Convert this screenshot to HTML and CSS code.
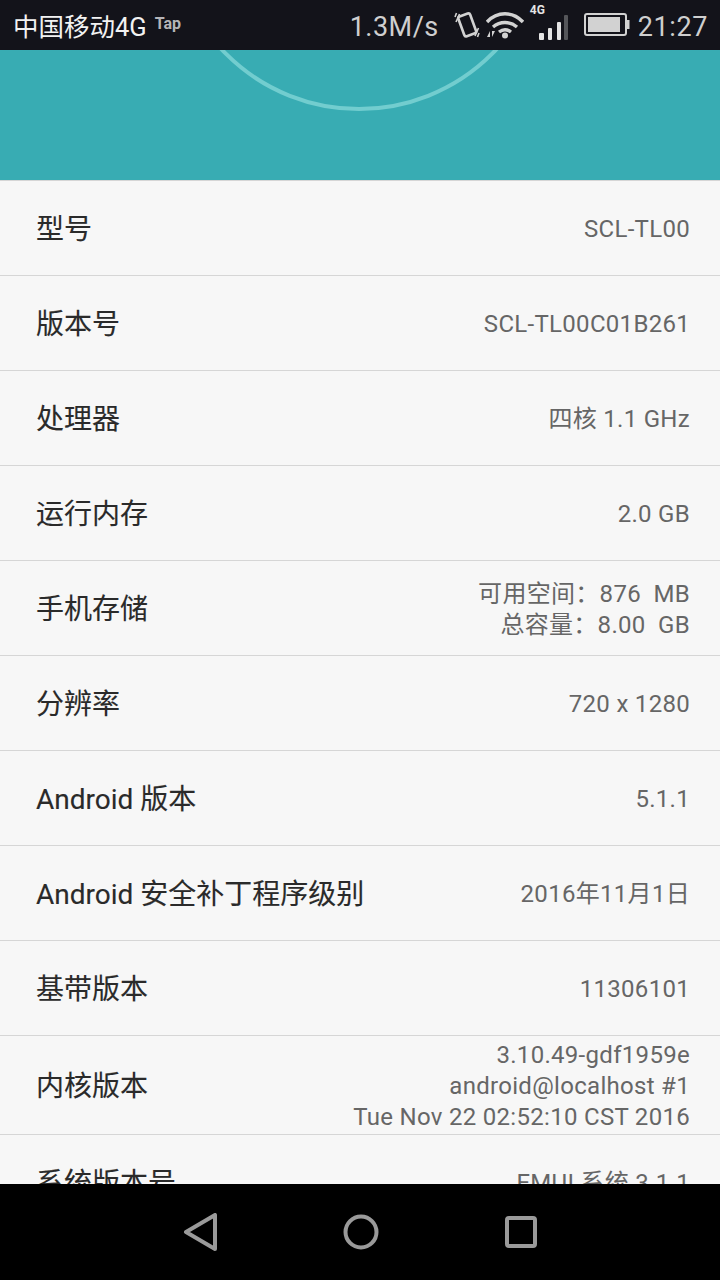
FILE: index.html
```html
<!DOCTYPE html>
<html lang="zh-CN">
<head>
    <meta charset="UTF-8">
    <title>关于手机</title>
    <link rel="stylesheet" href="styles.css">
</head>
<body>
    <div class="screen">
        <div class="status-bar">
            <div class="status-left">
                <span class="carrier">中国移动4G</span>
                <span class="tap">Tap</span>
            </div>
            <div class="status-right">
                <span class="speed">1.3M/s</span>
                <svg class="icon-vibrate" width="26" height="28" viewBox="0 0 26 28">
                    <rect x="7" y="3.5" width="12.5" height="21" rx="2" transform="rotate(-20 13 14)" fill="none" stroke="#d2d2d2" stroke-width="2.6"/>
                    <path d="M2 11l3.5-8M1 6l1.5-4M21 25l3.5-8M23.5 26l1.5-4" stroke="#d2d2d2" stroke-width="1.6" fill="none"/>
                </svg>
                <svg class="icon-wifi" width="38" height="28" viewBox="0 0 38 28">
                    <path d="M1 11C11 0 27 0 37 11M7 16c7-6 17-6 24 0M13 21c4-3 8-3 12 0" stroke="#d2d2d2" stroke-width="3.4" fill="none"/>
                    <circle cx="19" cy="24.5" r="3" fill="#d2d2d2"/>
                    <path d="M4 26v-6l-3 6zM6 20v6l3-6z" fill="#d2d2d2"/>
                </svg>
                <div class="signal">
                    <span class="signal-4g">4G</span>
                    <svg width="30" height="26" viewBox="0 0 30 26">
                        <rect x="0" y="18" width="5" height="7" rx="1" fill="#e4e4e4"/>
                        <rect x="9" y="13" width="4" height="12" rx="1" fill="#e4e4e4"/>
                        <rect x="18" y="7" width="4" height="18" rx="1" fill="#e4e4e4"/>
                        <rect x="25" y="0" width="4" height="25" rx="1" fill="#55565a"/>
                    </svg>
                </div>
                <svg class="icon-battery" width="46" height="24" viewBox="0 0 46 24">
                    <rect x="1" y="1" width="41" height="21" rx="2" fill="none" stroke="#d2d2d2" stroke-width="2"/>
                    <rect x="4" y="4" width="32" height="15" fill="#d2d2d2"/>
                    <rect x="43" y="7" width="2.5" height="9" fill="#d2d2d2"/>
                </svg>
                <span class="clock">21:27</span>
            </div>
        </div>

        <div class="hero">
            <svg class="hero-arc" width="300" height="62" viewBox="0 0 300 62">
                <circle cx="150" cy="-129" r="188" fill="none" stroke="#72cdcf" stroke-width="4"/>
            </svg>
        </div>

        <div class="info-list">
            <div class="info-row"><span class="label">型号</span><span class="value">SCL-TL00</span></div>
            <div class="info-row"><span class="label">版本号</span><span class="value">SCL-TL00C01B261</span></div>
            <div class="info-row"><span class="label">处理器</span><span class="value">四核 1.1 GHz</span></div>
            <div class="info-row"><span class="label">运行内存</span><span class="value">2.0 GB</span></div>
            <div class="info-row"><span class="label">手机存储</span><span class="value">可用空间：876&nbsp; MB<br>总容量：8.00&nbsp; GB</span></div>
            <div class="info-row"><span class="label">分辨率</span><span class="value">720 x 1280</span></div>
            <div class="info-row"><span class="label">Android 版本</span><span class="value">5.1.1</span></div>
            <div class="info-row"><span class="label">Android 安全补丁程序级别</span><span class="value">2016年11月1日</span></div>
            <div class="info-row"><span class="label">基带版本</span><span class="value">11306101</span></div>
            <div class="info-row tall"><span class="label">内核版本</span><span class="value">3.10.49-gdf1959e<br>android@localhost #1<br>Tue Nov 22 02:52:10 CST 2016</span></div>
            <div class="info-row"><span class="label">系统版本号</span><span class="value">EMUI 系统 3.1.1</span></div>
        </div>

        <div class="nav-bar">
            <svg width="36" height="38" viewBox="0 0 36 38">
                <path d="M3 19L32 2V36Z" fill="none" stroke="#9a9a9a" stroke-width="4" stroke-linejoin="round"/>
            </svg>
            <svg width="36" height="36" viewBox="0 0 36 36">
                <circle cx="18" cy="18" r="15.5" fill="none" stroke="#9a9a9a" stroke-width="4"/>
            </svg>
            <svg class="nav-square" width="32" height="32" viewBox="0 0 32 32">
                <rect x="2" y="2" width="28" height="28" rx="2" fill="none" stroke="#9a9a9a" stroke-width="4"/>
            </svg>
        </div>
    </div>
</body>
</html>
```

FILE: styles.css
```css
* {
    margin: 0;
    padding: 0;
    box-sizing: border-box;
}
body {
    font-family: Roboto, "Noto Sans CJK SC", sans-serif;
    background: #f7f7f7;
}
.screen {
    display: flex;
    flex-direction: column;
    width: 720px;
    height: 1280px;
    overflow: hidden;
}
.status-bar {
    display: flex;
    justify-content: space-between;
    align-items: center;
    flex: 0 0 50px;
    padding: 0 12px 0 13px;
    background: #13131a;
}
.status-left {
    display: flex;
    align-items: center;
    gap: 8px;
}
.carrier {
    font-size: 25.5px;
    color: #f2f2f2;
    margin-bottom: 2px;
}
.tap {
    font-size: 16px;
    font-weight: 700;
    color: #b4b4b8;
    margin-bottom: 4px;
}
.status-right {
    display: flex;
    align-items: center;
    color: #cfcfcf;
    font-size: 27px;
}
.speed {
    letter-spacing: 0.5px;
    margin-right: 15px;
    padding-top: 3px;
}
.icon-vibrate {
    margin-right: 6px;
}
.icon-wifi {
    margin-right: 6px;
}
.signal {
    position: relative;
    width: 39px;
    height: 32px;
    display: flex;
    align-items: flex-end;
    justify-content: flex-end;
    margin-right: 15px;
}
.signal-4g {
    position: absolute;
    top: -6px;
    left: 0;
    font-size: 12px;
    font-weight: 700;
    color: #e4e4e4;
}
.icon-battery {
    margin-right: 8px;
}
.clock {
    letter-spacing: 0.6px;
    padding-top: 3px;
}
.hero {
    position: relative;
    flex: 0 0 130px;
    background: #38acb3;
    overflow: hidden;
}
.hero-arc {
    position: absolute;
    top: 0;
    left: 209px;
}
.info-list {
    flex: 1;
    overflow: hidden;
    background: #f7f7f7;
    border-top: 1px solid #d6d6d6;
}
.info-row {
    display: flex;
    justify-content: space-between;
    align-items: center;
    height: 95px;
    padding: 0 30px 0 36px;
    border-bottom: 1px solid #d6d6d6;
}
.info-row.tall {
    height: 99px;
}
.label {
    font-size: 28px;
    color: #2a2a2a;
    margin-bottom: 2px;
    -webkit-text-stroke: 0.12px #2a2a2a;
}
.value {
    font-size: 24px;
    line-height: 31px;
    color: #666;
    text-align: right;
    letter-spacing: 0.3px;
    padding-top: 3px;
}
.nav-bar {
    display: flex;
    justify-content: center;
    align-items: center;
    gap: 124px;
    flex: 0 0 96px;
    padding-bottom: 1px;
    background: #000;
}
.nav-square {
    margin-left: 2px;
}
```
